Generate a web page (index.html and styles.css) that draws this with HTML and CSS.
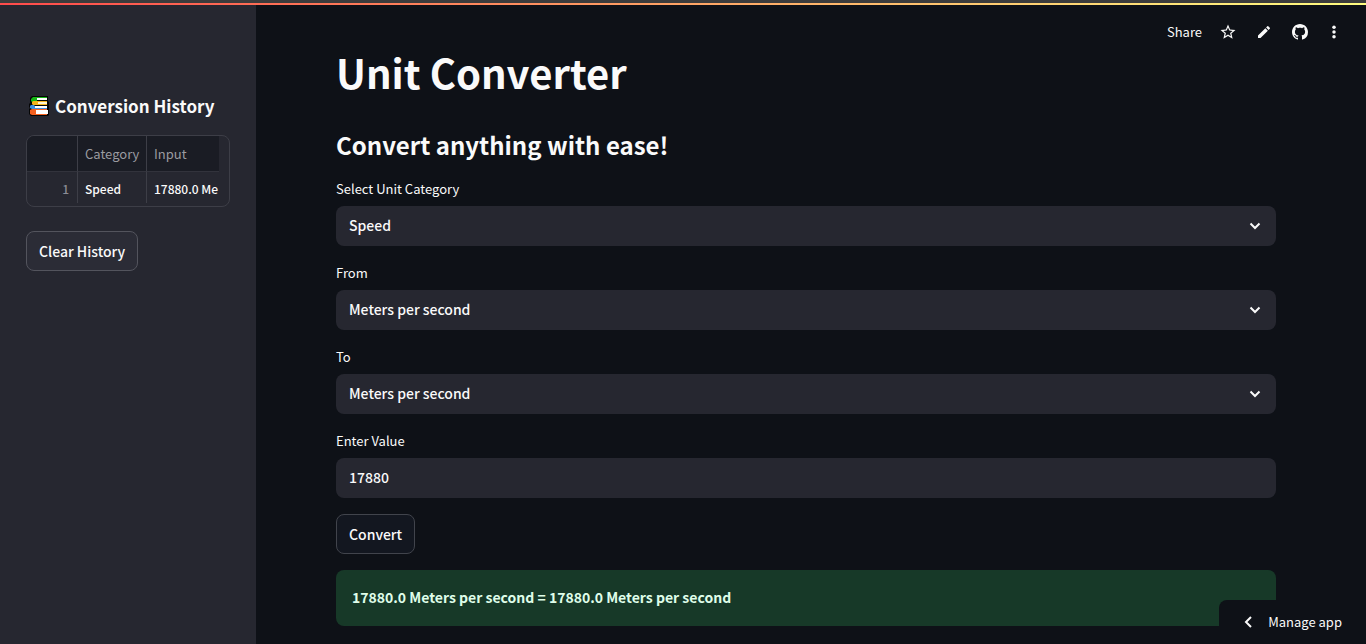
FILE: index.html
```html
<!DOCTYPE html>
<html lang="en">
<head>
<meta charset="utf-8">
<meta name="viewport" content="width=device-width, initial-scale=1">
<title>Unit Converter</title>
<link rel="stylesheet" href="styles.css">
</head>
<body>
<div class="window-edge"></div>
<div class="decoration"></div>
<div class="app">
  <aside class="sidebar">
    <h2 class="history-title">
      <svg class="books" viewBox="0 0 20 20" aria-hidden="true">
        <path fill="#050505" d="M3 0h16v5l1 1v13l-1 1H2l-2-2v-5l1-1-1-1V8l1-1V2z"/>
        <path fill="#16b516" d="M4 1h14v1H8v3h10v1H3L2 5V3z"/>
        <path fill="#fff" d="M8 2h10v2H8z"/>
        <path fill="#f5b51b" d="M4 5h14v1H9v2h9v1H4L3 8V6z"/>
        <path fill="#fff3cf" d="M9 6h9v2H9z"/>
        <path fill="#3c8fe0" d="M2 9h3l1 1h12v3H3l-2-1v-2z"/>
        <path fill="#fff" d="M6 10h12v2H6z"/>
        <path fill="#f4601f" d="M3 13h15v1H8v4h10v1H3l-2-1v-4z"/>
        <path fill="#fff" d="M7 14h12v4H7z"/>
      </svg>
      <span>Conversion History</span>
    </h2>
    <div class="table-frame">
      <table class="history">
        <thead><tr><th class="index"></th><th class="category">Category</th><th class="entry">Input</th></tr></thead>
        <tbody><tr><td class="index">1</td><td class="category">Speed</td><td class="entry">17880.0 Me</td></tr></tbody>
      </table>
    </div>
    <button class="button clear" type="button">Clear History</button>
  </aside>
  <main class="main">
    <nav class="toolbar">
      <button class="tool share" type="button">Share</button>
      <button class="tool star" type="button" aria-label="Favorite"><svg viewBox="0 0 24 24"><path d="M22 9.24l-7.19-.62L12 2 9.19 8.63 2 9.24l5.46 4.73L5.82 21 12 17.27 18.18 21l-1.63-7.03L22 9.24zM12 15.4l-3.76 2.27 1-4.28-3.32-2.88 4.38-.38L12 6.1l1.71 4.04 4.38.38-3.32 2.88 1 4.28L12 15.4z"/></svg></button>
      <button class="tool" type="button" aria-label="Edit"><svg viewBox="0 0 24 24"><path d="M3 17.25V21h3.75L17.81 9.94l-3.75-3.75L3 17.25zM20.71 7.04a1 1 0 0 0 0-1.41l-2.34-2.34a1 1 0 0 0-1.41 0l-1.83 1.83 3.75 3.75 1.83-1.83z"/></svg></button>
      <button class="tool" type="button" aria-label="View source"><svg viewBox="0 0 16 16"><path d="M8 0C3.58 0 0 3.58 0 8c0 3.54 2.29 6.53 5.47 7.59.4.07.55-.17.55-.38 0-.19-.01-.82-.01-1.49-2.01.37-2.53-.49-2.69-.94-.09-.23-.48-.94-.82-1.13-.28-.15-.68-.52-.01-.53.63-.01 1.08.58 1.23.82.72 1.21 1.87.87 2.33.66.07-.52.28-.87.51-1.07-1.78-.2-3.64-.89-3.64-3.95 0-.87.31-1.59.82-2.15-.08-.2-.36-1.02.08-2.12 0 0 .67-.21 2.2.82.64-.18 1.32-.27 2-.27s1.36.09 2 .27c1.53-1.04 2.2-.82 2.2-.82.44 1.1.16 1.92.08 2.12.51.56.82 1.27.82 2.15 0 3.07-1.87 3.75-3.65 3.95.29.25.54.73.54 1.48 0 1.07-.01 1.93-.01 2.2 0 .21.15.46.55.38A8.01 8.01 0 0 0 16 8c0-4.42-3.58-8-8-8z"/></svg></button>
      <button class="tool menu" type="button" aria-label="More"><svg viewBox="0 0 24 24"><circle cx="12" cy="4" r="3"/><circle cx="12" cy="12" r="3"/><circle cx="12" cy="20" r="3"/></svg></button>
    </nav>
    <h1 class="title">Unit Converter</h1>
    <h2 class="subtitle">Convert anything with ease!</h2>
    <form class="form">
      <div class="field">
        <label for="category">Select Unit Category</label>
        <div class="control">
          <select id="category"><option>Speed</option></select>
          <svg class="chevron" viewBox="0 0 12 8" aria-hidden="true"><path d="M1.5 1.5 6 6l4.500-4.500"/></svg>
        </div>
      </div>
      <div class="field">
        <label for="from">From</label>
        <div class="control">
          <select id="from"><option>Meters per second</option></select>
          <svg class="chevron" viewBox="0 0 12 8" aria-hidden="true"><path d="M1.5 1.5 6 6l4.500-4.500"/></svg>
        </div>
      </div>
      <div class="field">
        <label for="to">To</label>
        <div class="control">
          <select id="to"><option>Meters per second</option></select>
          <svg class="chevron" viewBox="0 0 12 8" aria-hidden="true"><path d="M1.5 1.5 6 6l4.500-4.500"/></svg>
        </div>
      </div>
      <div class="field">
        <label for="value">Enter Value</label>
        <div class="control"><input id="value" type="text" value="17880"></div>
      </div>
      <button class="button" type="button">Convert</button>
    </form>
    <div class="result" role="status">17880.0 Meters per second = 17880.0 Meters per second</div>
  </main>
</div>
<button class="manage" type="button">
  <svg viewBox="0 0 8 12" aria-hidden="true"><path d="M7 1 2 6l5 5"/></svg>
  <span>Manage app</span>
</button>
</body>
</html>
```
FILE: styles.css
```css
* { box-sizing: border-box; }

body {
  margin: 0;
  min-height: 100vh;
  display: flex;
  flex-direction: column;
  background: #0e1117;
  color: #fafafa;
  font-family: "Noto Sans CJK SC", "Noto Sans", sans-serif;
  font-size: 14px;
  font-weight: 500;
  line-height: 24px;
}

button, input, select { font: inherit; color: inherit; }
h1, h2 { margin: 0; }

.window-edge { height: 3px; background: #3c3c3c; }
.decoration { height: 2px; background: linear-gradient(90deg, #ff4b4b, #fffd80); }
.app { flex: 1; display: flex; }

.sidebar {
  flex: 0 0 256px;
  padding: 87px 26px 24px;
  background: #262730;
}

.history-title {
  display: flex;
  align-items: center;
  gap: 6px;
  padding-left: 3px;
  margin-bottom: 15px;
  font-size: 17px;
  font-weight: 700;
  line-height: 28px;
  white-space: nowrap;
}
.books { width: 20px; height: 20px; flex: none; }

.table-frame {
  margin-bottom: 24px;
  padding: 0 10px 3px 0;
  border: 1px solid #3d3e47;
  border-radius: 8px;
  overflow: hidden;
}
.history {
  width: 100%;
  table-layout: fixed;
  border-collapse: separate;
  border-spacing: 0;
  font-size: 13px;
  line-height: 20px;
}
.history th, .history td {
  padding: 0 7px;
  text-align: left;
  font-weight: 400;
  white-space: nowrap;
  border-right: 1px solid #3d3e47;
}
.history th { height: 36px; background: #1a1c24; color: #9a9ba0; border-bottom: 1px solid #32333c; }
.history td { height: 31px; padding-top: 2px; font-size: 12px; font-weight: 500; }
.history .index { width: 51px; padding-right: 8px; text-align: right; color: #8b8c95; }
.history .category { width: 69px; }
.history .entry { border-right: 0; padding-right: 0; }

.button {
  height: 40px;
  padding: 0 12px 1px;
  border: 1px solid #41444c;
  border-radius: 8px;
  background: #131720;
}
.clear { background: #2b2c36; border-color: #53545d; }

.main { flex: 1; min-width: 0; padding: 0 90px 16px 80px; }

.toolbar {
  position: absolute;
  top: 16px;
  right: 24px;
  display: flex;
  align-items: center;
  gap: 16px;
}
.tool {
  display: flex;
  align-items: center;
  justify-content: center;
  width: 20px;
  height: 32px;
  padding: 0;
  border: 0;
  background: none;
}
.share { width: auto; font-size: 13px; font-weight: 400; }
.tool svg { width: 16px; height: 16px; fill: currentColor; flex: none; }
.tool.star svg { width: 18px; height: 18px; }
.tool.menu svg { height: 14px; width: 14px; }
.tool.menu { width: 16px; }

.title { padding-top: 40px; font-size: 40px; font-weight: 700; line-height: 54px; }
.subtitle { margin: 29px 0 16px; font-size: 24px; font-weight: 700; line-height: 34px; }

.field { margin-bottom: 16px; }
.field label { display: block; margin-bottom: 6px; font-size: 13px; font-weight: 400; line-height: 22px; }
.control { position: relative; }
.control select, .control input {
  display: block;
  width: 100%;
  height: 40px;
  padding: 0 13px 2px;
  border: 0;
  border-radius: 8px;
  background: #262730;
  appearance: none;
}
.chevron {
  position: absolute;
  top: 16px;
  right: 15px;
  width: 12px;
  height: 8px;
  pointer-events: none;
}
.chevron path, .manage path { fill: none; stroke: #fafafa; stroke-width: 2; }

.result {
  margin-top: 16px;
  padding: 15px 16px 17px;
  border-radius: 8px;
  background: #173928;
  color: #dffde9;
  font-weight: 700;
}

.manage {
  position: fixed;
  right: 0;
  bottom: 0;
  display: flex;
  align-items: center;
  gap: 16px;
  height: 44px;
  padding: 0 24px 1px 25px;
  border: 0;
  border-radius: 8px 0 0 0;
  background: #0e1117;
  font-size: 13px;
  font-weight: 400;
}
.manage svg { width: 8px; height: 12px; }
```
